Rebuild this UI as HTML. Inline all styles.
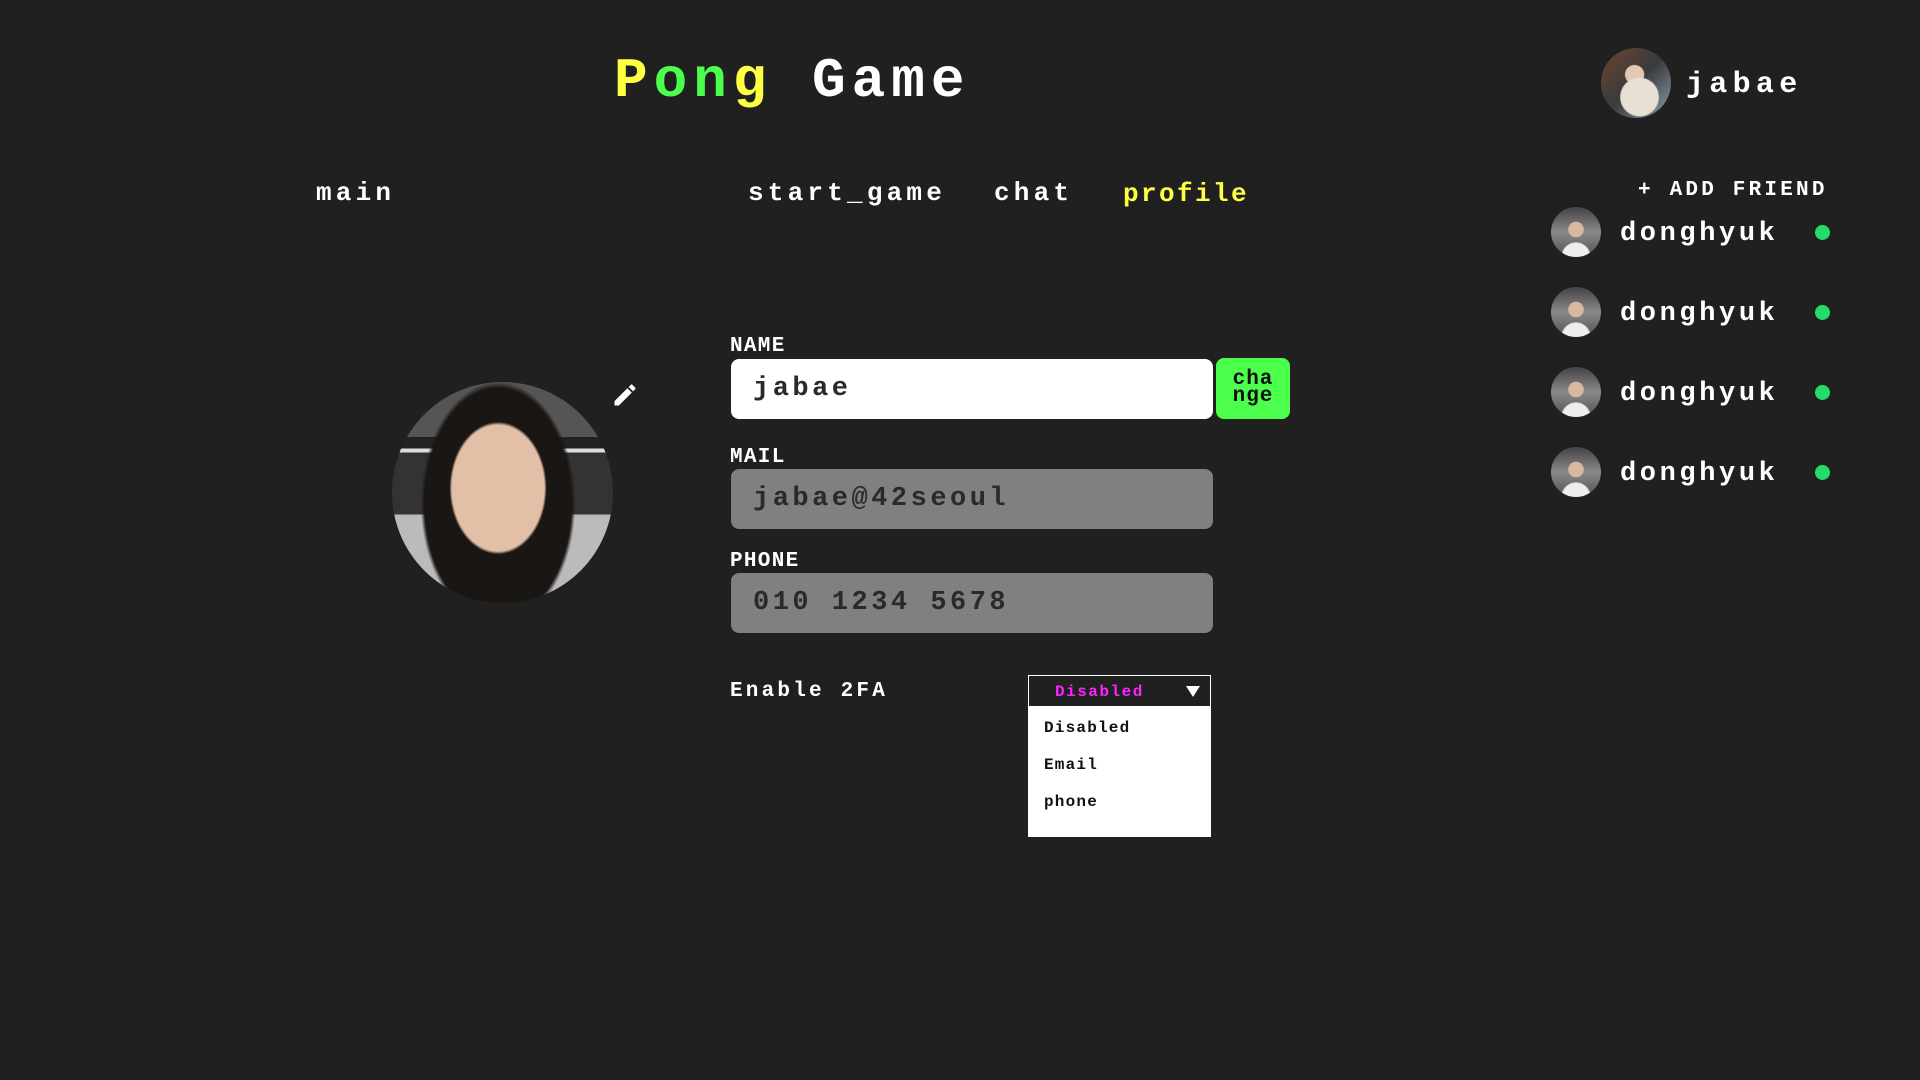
<!DOCTYPE html>
<html><head><meta charset="utf-8"><style>
*{margin:0;padding:0;box-sizing:border-box}
body{width:1920px;height:1080px;background:#202020;position:relative;overflow:hidden;font-family:"Liberation Mono","DejaVu Sans Mono",monospace;font-weight:bold;color:#fff}
.a{position:absolute;white-space:nowrap;line-height:1}
.nav{font-size:26px;letter-spacing:4.2px}
.av{position:absolute;border-radius:50%;overflow:hidden}
.friend{font-size:27px;letter-spacing:3.6px}
.dot{position:absolute;width:15px;height:15px;border-radius:50%;background:#22dd66}
.lbl{font-size:21px;letter-spacing:1.3px}
.inp{position:absolute;left:731px;width:482px;height:60px;border-radius:8px;font-size:27px;letter-spacing:3.5px;padding-left:22px;line-height:60px;color:#2a2a2a}
.opt{font-size:16px;color:#111;letter-spacing:1.2px}
</style></head><body>
<div class="a" style="left:614px;top:53px;font-size:56px;letter-spacing:6px;font-weight:bold"><span style="color:#ffff44">P</span><span style="color:#4cff4c">on</span><span style="color:#ffff44">g</span> <span style="color:#fff">Game</span></div>

<div class="a nav" style="left:316px;top:180px">main</div>
<div class="a nav" style="left:748px;top:180px">start_game</div>
<div class="a nav" style="left:994px;top:180px">chat</div>
<div class="a nav" style="left:1123px;top:181px;color:#ffff44;letter-spacing:2.4px">profile</div>

<div class="av" style="left:1601px;top:48px;width:70px;height:70px;background:radial-gradient(circle at 55% 70%,#e8e0d4 0 30%,transparent 32%),radial-gradient(circle at 48% 38%,#e6c8b4 0 16%,transparent 18%),linear-gradient(135deg,#6a4630,#3a3a3a 50%,#8aa0b0)"></div>
<div class="a" style="left:1686px;top:70px;font-size:30px;letter-spacing:5.3px">jabae</div>

<div class="a" style="left:1638px;top:180px;font-size:21px;letter-spacing:3.2px">+ ADD FRIEND</div>

<div class="av" style="left:1551px;top:207px;width:50px;height:50px;background:radial-gradient(circle at 50% 45%,#d8b8a0 0 20%,transparent 22%),radial-gradient(circle at 50% 100%,#eee 0 25%,transparent 27%),linear-gradient(180deg,#444,#888 50%,#555)"></div>
<div class="a friend" style="left:1620px;top:221px">donghyuk</div><div class="dot" style="left:1815px;top:225px"></div>
<div class="av" style="left:1551px;top:287px;width:50px;height:50px;background:radial-gradient(circle at 50% 45%,#d8b8a0 0 20%,transparent 22%),radial-gradient(circle at 50% 100%,#eee 0 25%,transparent 27%),linear-gradient(180deg,#444,#888 50%,#555)"></div>
<div class="a friend" style="left:1620px;top:301px">donghyuk</div><div class="dot" style="left:1815px;top:305px"></div>
<div class="av" style="left:1551px;top:367px;width:50px;height:50px;background:radial-gradient(circle at 50% 45%,#d8b8a0 0 20%,transparent 22%),radial-gradient(circle at 50% 100%,#eee 0 25%,transparent 27%),linear-gradient(180deg,#444,#888 50%,#555)"></div>
<div class="a friend" style="left:1620px;top:381px">donghyuk</div><div class="dot" style="left:1815px;top:385px"></div>
<div class="av" style="left:1551px;top:447px;width:50px;height:50px;background:radial-gradient(circle at 50% 45%,#d8b8a0 0 20%,transparent 22%),radial-gradient(circle at 50% 100%,#eee 0 25%,transparent 27%),linear-gradient(180deg,#444,#888 50%,#555)"></div>
<div class="a friend" style="left:1620px;top:461px">donghyuk</div><div class="dot" style="left:1815px;top:465px"></div>

<div class="av" style="left:392px;top:382px;width:221px;height:221px;background:radial-gradient(ellipse 22% 30% at 48% 48%,#e2c0a8 0 95%,transparent 100%),radial-gradient(ellipse 35% 55% at 48% 55%,#1a1614 0 95%,transparent 100%),linear-gradient(180deg,#555 0 25%,#222 25% 30%,#ddd 30% 32%,#333 32% 60%,#bbb 60% 100%)"></div>
<svg class="a" style="left:611px;top:381px" width="28" height="28" viewBox="0 0 24 24"><path fill="#fff" d="M3 17.25V21h3.75L17.81 9.94l-3.75-3.75L3 17.25zM20.71 7.04a1 1 0 0 0 0-1.41l-2.34-2.34a1 1 0 0 0-1.41 0l-1.83 1.83 3.75 3.75 1.83-1.83z"/></svg>

<div class="a lbl" style="left:730px;top:336px">NAME</div>
<div class="inp" style="top:359px;background:#fff">jabae</div>
<div class="a" style="left:1216px;top:358px;width:74px;height:61px;background:#4cff4c;border-radius:8px;color:#111;font-size:21px;line-height:17px;white-space:normal;text-align:center;padding-top:13px;letter-spacing:1px">cha<br>nge</div>

<div class="a lbl" style="left:730px;top:447px">MAIL</div>
<div class="inp" style="top:469px;background:#808080">jabae@42seoul</div>
<div class="a lbl" style="left:730px;top:551px">PHONE</div>
<div class="inp" style="top:573px;background:#808080">010 1234 5678</div>

<div class="a" style="left:730px;top:681px;font-size:21px;letter-spacing:3.2px">Enable 2FA</div>
<div class="a" style="left:1028px;top:675px;width:183px;height:162px;background:#fff;border:1px solid #fff">
 <div style="height:30px;background:#202020;position:relative">
  <div class="a" style="left:26px;top:8px;font-size:16px;color:#ff22ff;letter-spacing:1.5px">Disabled</div>
  <div class="a" style="right:10px;top:10px;width:0;height:0;border-left:7px solid transparent;border-right:7px solid transparent;border-top:11px solid #fff"></div>
 </div>
 <div class="a opt" style="left:15px;top:44px">Disabled</div>
 <div class="a opt" style="left:15px;top:81px">Email</div>
 <div class="a opt" style="left:15px;top:118px">phone</div>
</div>
</body></html>
